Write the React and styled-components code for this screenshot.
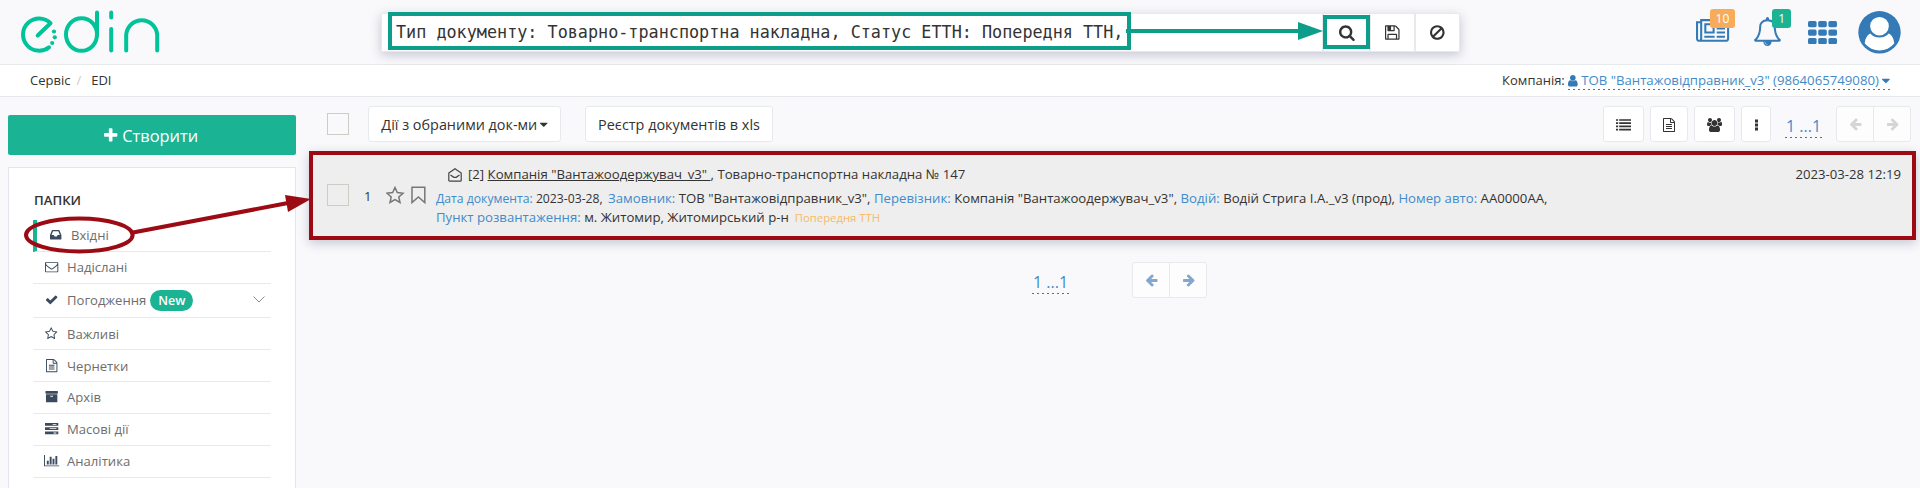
import React from "react";
import styled, { createGlobalStyle } from "styled-components";

const Global = createGlobalStyle`
  *, *::before, *::after { box-sizing: border-box; }
  body { margin: 0; background: #f9f9fb; overflow: hidden; }
  #root { font-family: "Open Sans", sans-serif; font-size: 13px; line-height: 18px; color: #333; }
`;

const C = {
  green: "#1ab394",
  teal: "#0d9e8b",
  red: "#9c0a14",
  blue: "#337ab7",
  line: "#e7eaec",
};

/* ---------- icons (1792 unit grid) ---------- */
const ICONS = {
  plus: [192, 1408, "M1600 736v192q0 40-28 68t-68 28h-416v416q0 40-28 68t-68 28h-192q-40 0-68-28t-28-68v-416h-416q-40 0-68-28t-28-68v-192q0-40 28-68t68-28h416v-416q0-40 28-68t68-28h192q40 0 68 28t28 68v416h416q40 0 68 28t28 68z"],
  search: [64, 1664, "M1216 832q0-185-131.5-316.5t-316.5-131.5-316.5 131.5-131.5 316.5 131.5 316.5 316.5 131.5 316.5-131.5 131.5-316.5zm512 832q0 52-38 90t-90 38q-54 0-90-38l-343-342q-179 124-399 124-143 0-273.5-55.5t-225-150-150-225-55.5-273.5 55.5-273.5 150-225 225-150 273.5-55.5 273.5 55.5 225 150 150 225 55.5 273.5q0 220-124 399l343 343q37 37 37 90z"],
  floppy: [128, 1536, "M512 1536h768v-384h-768v384zm896 0h128v-896q0-14-10-38.5t-20-34.5l-281-281q-10-10-34-20t-39-10v416q0 40-28 68t-68 28h-576q-40 0-68-28t-28-68v-416h-128v1280h128v-416q0-40 28-68t68-28h832q40 0 68 28t28 68v416zm-384-928v-320q0-13-9.5-22.5t-22.5-9.5h-192q-13 0-22.5 9.5t-9.5 22.5v320q0 13 9.5 22.5t22.5 9.5h192q13 0 22.5-9.5t9.5-22.5zm640 32v928q0 40-28 68t-68 28h-1344q-40 0-68-28t-28-68v-1344q0-40 28-68t68-28h928q40 0 88 20t76 48l280 280q28 28 48 76t20 88z"],
  ban: [128, 1536, "M1440 893q0-161-87-295l-754 753q137 89 297 89 111 0 211.5-43.5t173.5-116.5 116-174.5 43-212.5zm-999 299l755-754q-135-91-300-91-148 0-273 73t-198 199-73 274q0 162 89 299zm1223-299q0 157-61 300t-163.5 246-245 164-298.5 61-298.5-61-245-164-163.5-246-61-300 61-299.5 163.5-245.5 245-164 298.5-61 298.5 61 245 164 163.5 245.5 61 299.5z"],
  news: [0, 2048, "M1024 512h-384v384h384v-384zm128 640v128h-640v-128h640zm0-768v640h-640v-640h640zm640 768v128h-512v-128h512zm0-256v128h-512v-128h512zm0-256v128h-512v-128h512zm0-256v128h-512v-128h512zm-1536 960v-960h-128v960q0 26 19 45t45 19 45-19 19-45zm1664 0v-1088h-1536v1088q0 33-11 64h1483q26 0 45-19t19-45zm128-1216v1216q0 80-56 136t-136 56h-1664q-80 0-136-56t-56-136v-1088h256v-128h1792z"],
  bell: [64, 1664, "M912 1696q0-16-16-16-59 0-101.5-42.5t-42.5-101.5q0-16-16-16t-16 16q0 73 51.5 124.5t124.5 51.5q16 0 16-16zm-666-288h1300q-266-300-266-832 0-51-24-105t-69-103-121.5-80.5-169.5-31.5-169.5 31.5-121.5 80.5-69 103-24 105q0 532-266 832zm1482 0q0 52-38 90t-90 38h-448q0 106-75 181t-181 75-181-75-75-181h-448q-52 0-90-38t-38-90q50-42 91-88t85-119.5 74.5-158.5 50-206 19.5-260q0-152 117-282.5t307-158.5q-8-19-8-39 0-40 28-68t68-28 68 28 28 68q0 20-8 39 190 28 307 158.5t117 282.5q0 139 19.5 260t50 206 74.5 158.5 85 119.5 91 88z"],
  user: [256, 1280, "M1536 1399q0 109-62.5 187t-150.5 78h-854q-88 0-150.5-78t-62.5-187q0-85 8.5-160.5t31.5-152 58.5-131 94-89 134.5-34.5q131 128 313 128t313-128q76 0 134.5 34.5t94 89 58.5 131 31.5 152 8.5 160.5zm-256-887q0 159-112.5 271.5t-271.5 112.5-271.5-112.5-112.5-271.5 112.5-271.5 271.5-112.5 271.5 112.5 112.5 271.5z"],
  inbox: [128, 1536, "M1151 960h316q-1-3-2.5-8t-2.5-8l-212-496h-708l-212 496q-1 2-2.5 8t-2.5 8h316l95 192h320zm513 30v482q0 26-19 45t-45 19h-1408q-26 0-45-19t-19-45v-482q0-62 25-123l238-552q10-25 36.5-42t52.5-17h832q26 0 52.5 17t36.5 42l238 552q25 61 25 123z"],
  envelope: [0, 1792, "M1664 1504v-768q-32 36-69 66-268 206-426 338-51 43-83 67t-86.5 48.5-102.5 24.5h-2q-48 0-102.5-24.5t-86.5-48.5-83-67q-158-132-426-338-37-30-69-66v768q0 13 9.5 22.5t22.5 9.5h1472q13 0 22.5-9.5t9.5-22.5zm0-1051v-24.5l-.5-13-3-12.5-5.5-9-9-7.5-14-2.5h-1472q-13 0-22.5 9.5t-9.5 22.5q0 168 147 284 193 152 401 317 6 5 35 29.5t46 37.5 44.5 31.5 50.5 27.5 43 9h2q20 0 43-9t50.5-27.5 44.5-31.5 46-37.5 35-29.5q208-165 401-317 54-43 100.5-115.5t46.5-131.5zm128-37v1088q0 66-47 113t-113 47h-1472q-66 0-113-47t-47-113v-1088q0-66 47-113t113-47h1472q66 0 113 47t47 113z"],
  check: [0, 1792, "M1671 566q0 40-28 68l-724 724-136 136q-28 28-68 28t-68-28l-136-136-362-362q-28-28-28-68t28-68l136-136q28-28 68-28t68 28l294 295 656-657q28-28 68-28t68 28l136 136q28 28 28 68z"],
  star: [64, 1664, "M1201 1004l306-297-422-62-189-382-189 382-422 62 306 297-73 421 378-199 377 199zm527-357q0 22-26 48l-363 354 86 500q1 7 1 20 0 50-41 50-19 0-40-12l-449-236-449 236q-22 12-40 12-21 0-31.5-14.5t-10.5-35.5q0-6 2-20l86-500-364-354q-25-27-25-48 0-37 56-46l502-73 225-455q19-41 49-41t49 41l225 455 502 73q56 9 56 46z"],
  file: [128, 1536, "M1596 380q28 28 48 76t20 88v1152q0 40-28 68t-68 28h-1344q-40 0-68-28t-28-68v-1600q0-40 28-68t68-28h896q40 0 88 20t76 48zm-444-244v376h376q-10-29-22-41l-313-313q-12-12-41-22zm384 1528v-1024h-416q-40 0-68-28t-28-68v-416h-768v1536h1280zm-1024-864q0-14 9-23t23-9h704q14 0 23 9t9 23v64q0 14-9 23t-23 9h-704q-14 0-23-9t-9-23v-64zm736 224q14 0 23 9t9 23v64q0 14-9 23t-23 9h-704q-14 0-23-9t-9-23v-64q0-14 9-23t23-9h704zm0 256q14 0 23 9t9 23v64q0 14-9 23t-23 9h-704q-14 0-23-9t-9-23v-64q0-14 9-23t23-9h704z"],
  archive: [0, 1792, "M1088 832q0-26-19-45t-45-19h-256q-26 0-45 19t-19 45 19 45 45 19h256q26 0 45-19t19-45zm576-192v960q0 26-19 45t-45 19h-1408q-26 0-45-19t-19-45v-960q0-26 19-45t45-19h1408q26 0 45 19t19 45zm64-448v256q0 26-19 45t-45 19h-1536q-26 0-45-19t-19-45v-256q0-26 19-45t45-19h1536q26 0 45 19t19 45z"],
  server: [0, 1792, "M0 128h1792v384H0zM1024 256v128h512V256zM0 704h1792v384H0zM640 832v128h896V832zM0 1280h1792v384H0zM1152 1408v128h384v-128z"],
  chart: [0, 2048, "M640 896v512h-256v-512h256zm384-512v1024h-256v-1024h256zm1024 1152v128h-2048v-1536h128v1408h1920zm-640-896v768h-256v-768h256zm384-384v1152h-256v-1152h256z"],
  left: [64, 1600, "M1664 896v128q0 53-32.5 90.5t-84.5 37.5h-704l293 294q38 36 38 90t-38 90l-75 76q-37 37-90 37-52 0-91-37l-651-652q-37-37-37-90 0-52 37-91l651-650q38-38 91-38 52 0 90 38l75 74q38 38 38 91t-38 91l-293 293h704q52 0 84.5 37.5t32.5 90.5z"],
  right: [0, 1664, "M1600 960q0 54-37 91l-651 651q-39 37-91 37-51 0-90-37l-75-75q-38-38-38-91t38-91l293-293h-704q-52 0-84.5-37.5t-32.5-90.5v-128q0-53 32.5-90.5t84.5-37.5h704l-293-294q-38-36-38-90t38-90l75-75q38-38 90-38 53 0 91 38l651 651q37 35 37 90z"],
  users: [0, 1920, "M593 896q-162 5-265 128h-134q-82 0-138-40.5t-56-118.5q0-353 124-353 6 0 43.5 21t97.5 42.5 119 21.5q67 0 133-23-5 37-5 66 0 159 93 293zm1071 637q0 120-73 189.5t-194 69.5h-874q-121 0-194-69.5t-73-189.5q0-53 3.5-103.5t14-109 26.5-108.5 43-97.5 62-81 85.5-53.5 111.5-20q10 0 43 21.5t73 48 107 48 135 21.5 135-21.5 107-48 73-48 43-21.5q61 0 111.5 20t85.5 53.5 62 81 43 97.5 26.5 108.5 14 109 3.5 103.5zm-1024-1277q0 106-75 181t-181 75-181-75-75-181 75-181 181-75 181 75 75 181zm704 384q0 159-112.5 271.5t-271.5 112.5-271.5-112.5-112.5-271.5 112.5-271.5 271.5-112.5 271.5 112.5 112.5 271.5zm576 225q0 78-56 118.5t-138 40.5h-134q-103-123-265-128 93-134 93-293 0-29-5-66 66 23 133 23 59 0 119-21.5t97.5-42.5 43.5-21q124 0 124 353zm-128-609q0 106-75 181t-181 75-181-75-75-181 75-181 181-75 181 75 75 181z"],
  list: [0, 1792, "M0 256h256v192H0zM384 256h1408v192H384zM0 640h256v192H0zM384 640h1408v192H384zM0 1024h256v192H0zM384 1024h1408v192H384zM0 1408h256v192H0zM384 1408h1408v192H384z"],
  dots: [640, 384, "M640 192h384v384H640zM640 704h384v384H640zM640 1216h384v384H640z"],
  caret: [384, 1024, "M1408 704q0 26-19 45l-448 448q-19 19-45 19t-45-19l-448-448q-19-19-19-45t19-45 45-19h896q26 0 45 19t19 45z"],
};

const Svg = styled.svg`
  display: inline-block;
  flex: none;
  fill: currentColor;
`;
const Icon = ({ name, size = 14, className }) => {
  const [x, w, d] = ICONS[name];
  return (
    <Svg className={className} width={(w / 1792) * size} height={size} viewBox={`${x} 0 ${w} 1792`} fillRule="evenodd" overflow="visible">
      <path d={d} />
    </Svg>
  );
};

/* ---------- header ---------- */
const Page = styled.div`
  position: relative;
  height: 488px;
  overflow: hidden;
`;
const Header = styled.header`
  display: flex;
  height: 65px;
  border-bottom: 1px solid ${C.line};
  padding-left: 20px;
`;
const Logo = styled.svg`
  width: 142px;
  height: 46px;
  margin-top: 9px;
  fill: none;
  stroke: #00c39a;
  stroke-width: 4;
  stroke-linecap: round;
  stroke-linejoin: round;
`;
const SearchBar = styled.div`
  display: flex;
  width: 1079px;
  height: 39px;
  margin: 13px 0 0 219px;
  background: #fff;
  border: 1px solid ${C.line};
  box-shadow: 0 3px 10px rgba(60, 65, 110, 0.28);
`;
const Query = styled.div`
  flex: 1;
  padding-left: 14px;
  font: 16.8px/36px "DejaVu Sans Mono", monospace;
  white-space: pre;
`;
const SearchAction = styled.div`
  display: flex;
  align-items: center;
  justify-content: center;
  width: ${(p) => p.$w}px;
  border-left: 2px solid ${C.line};
  padding-bottom: 1px;
`;
const HeaderTools = styled.div`
  display: flex;
  flex: 1;
  align-items: flex-start;
  justify-content: flex-end;
  padding-right: 19px;
  color: ${C.blue};
`;
const Tool = styled.div`
  position: relative;
  display: flex;
  margin: ${(p) => p.$top}px ${(p) => p.$right}px 0 0;
`;
const Badge = styled.span`
  position: absolute;
  left: ${(p) => p.$left}px;
  top: ${(p) => p.$top}px;
  width: ${(p) => p.$w}px;
  height: 19px;
  border-radius: 3px;
  background: ${(p) => p.$bg};
  color: #fff;
  font-size: 12px;
  font-weight: 500;
  line-height: 19px;
  text-align: center;
`;
const Crumbs = styled.nav`
  display: flex;
  justify-content: space-between;
  height: 32px;
  background: #fff;
  border-bottom: 1px solid ${C.line};
  padding: 6px 30px 0;
  line-height: 19px;
`;
const Slash = styled.span`
  color: #ccc;
  padding: 0 10px 0 6px;
`;
const dashes = `repeating-linear-gradient(90deg, ${C.blue} 0 2px, transparent 2px 5px) bottom / 100% 1px no-repeat`;
const Company = styled.a`
  display: inline-block;
  height: 19px;
  color: #428bca;
  font-size: 13.2px;
  background: ${dashes};
  svg { color: ${C.blue}; vertical-align: -2px; }
`;

/* ---------- sidebar ---------- */
const Body = styled.div`
  display: flex;
`;
const Sidebar = styled.aside`
  width: 288px;
  margin: 18px 13px 0 8px;
`;
const Create = styled.button`
  display: flex;
  align-items: center;
  justify-content: center;
  gap: 5px;
  width: 100%;
  height: 40px;
  padding: 0 2px 0 0;
  border: 0;
  border-radius: 2px;
  background: ${C.green};
  color: #fff;
  font: 16.4px "Open Sans", sans-serif;
`;
const Folders = styled.section`
  height: 360px;
  margin-top: 12px;
  border: 1px solid #e3e4ee;
  background: #fff;
  padding: 22px 24px 0;
`;
const FolderTitle = styled.h5`
  height: 30px;
  margin: 0;
  padding-left: 1px;
  font-size: 13.2px;
  font-weight: 600;
  line-height: 20px;
`;
const Folder = styled.div`
  display: flex;
  align-items: center;
  height: ${(p) => (p.$tall ? 34 : 32)}px;
  padding: 0 6px ${(p) => (p.$low ? 0 : 2)}px 10px;
  border-bottom: 1px solid ${C.line};
  border-left: ${(p) => (p.$active ? "4px solid " + C.green : "0")};
  color: #6d6d6d;
  font-size: 13.1px;
`;
const FolderIcon = styled.span`
  display: flex;
  justify-content: center;
  width: 17px;
  margin-right: 7px;
  color: #3a4a5f;
`;
const NewBadge = styled.span`
  width: 43px;
  height: 21px;
  margin: 2px 0 0 4px;
  border-radius: 11px;
  background: ${C.green};
  color: #fff;
  font-size: 12.5px;
  font-weight: 600;
  line-height: 21px;
  text-align: center;
`;
const Chevron = styled.svg`
  margin-left: auto;
  fill: none;
  stroke: #8a8f99;
`;

/* ---------- content ---------- */
const Main = styled.main`
  width: 1607px;
`;
const Toolbar = styled.div`
  display: flex;
  align-items: flex-start;
  height: 54px;
  padding: 9px 5px 0 18px;
`;
const Checkbox = styled.span`
  flex: none;
  width: 22px;
  height: 22px;
  border: 1px solid #cfccc6;
`;
const TopCheckbox = styled(Checkbox)`
  margin-top: 7px;
`;
const Spacer = styled.div`
  flex: 1;
`;
const Button = styled.button`
  display: flex;
  align-items: center;
  justify-content: center;
  gap: 3px;
  width: ${(p) => p.$w}px;
  height: 36px;
  margin: 0 0 0 ${(p) => p.$ml}px;
  padding: 1px 0 0;
  border: 1px solid ${C.line};
  border-radius: 3px;
  background: #fff;
  color: #333;
  font: 14.4px "Open Sans", sans-serif;
  white-space: nowrap;
`;
const Pages = styled.a`
  width: 37px;
  height: 24px;
  background: ${dashes};
  color: #428bca;
  font-size: 16px;
  line-height: 24px;
  text-align: center;
  white-space: nowrap;
`;
const TopPages = styled(Pages)`
  margin: 8px 14px 0 14px;
`;
const PagerButtons = styled.div`
  display: flex;
  width: 75px;
  height: 36px;
  border: 1px solid ${C.line};
  border-radius: 3px;
  background: #fdfdfd;
  color: ${(p) => (p.$muted ? "#d5d5d5" : "#85a6cd")};
`;
const PagerButton = styled.span`
  display: flex;
  flex: 1;
  align-items: center;
  justify-content: center;
  & + & { border-left: 1px solid ${C.line}; }
`;
const Row = styled.article`
  display: flex;
  height: 89px;
  border: 4px solid ${C.red};
  background: #eee;
  padding: 0 11px 0 14px;
  box-shadow: 0 3px 10px rgba(60, 65, 110, 0.28);
`;
const RowLead = styled.div`
  display: flex;
  width: 109px;
  padding-top: 29px;
`;
const RowNumber = styled.span`
  width: 36px;
  padding: 3px 0 0 15px;
`;
const Marks = styled.svg`
  margin: 2px 0 0 1px;
  fill: none;
  stroke: #777;
  stroke-width: 1.5;
`;
const RowText = styled.div`
  flex: 1;
  font-size: 13.2px;
`;
const Subject = styled.div`
  display: flex;
  padding: 10px 0 5px 12px;
  line-height: 19px;
  white-space: pre;
`;
const OpenMail = styled.svg`
  margin: 3px 6px 0 0;
  fill: none;
  stroke: #444;
  stroke-width: 1.2;
`;
const Detail = styled.div`
  line-height: 19px;
  white-space: pre;
`;
const Label = styled.span`
  color: #428bca;
`;
const DocDate = styled.span`
  margin-right: 2px;
  font-size: 12.2px;
`;
const Status = styled.span`
  margin-left: 6px;
  color: #f8b968;
  font-size: 11.3px;
`;
const RowDate = styled.time`
  padding-top: 10px;
  font-size: 13.15px;
  line-height: 19px;
`;
const BottomPager = styled.div`
  display: flex;
  padding: 22px 0 0 723px;
  ${PagerButtons} { margin-left: 63px; }
  ${Pages} { margin-top: 8px; }
`;
const Overlay = styled.svg`
  position: absolute;
  inset: 0;
  pointer-events: none;
`;

const FOLDERS = [
  ["inbox", "Вхідні"],
  ["envelope", "Надіслані"],
  ["check", "Погодження"],
  ["star", "Важливі"],
  ["file", "Чернетки"],
  ["archive", "Архів"],
  ["server", "Масові дії"],
  ["chart", "Аналітика"],
];

const Pager = ({ muted }) => (
  <PagerButtons $muted={muted}>
    <PagerButton><Icon name="left" /></PagerButton>
    <PagerButton><Icon name="right" /></PagerButton>
  </PagerButtons>
);

export default function App() {
  return (
    <Page>
      <Global />
      <Header>
        <Logo viewBox="20 9 142 46">
          <path d="M37.700 35.500L50.500 23.200A16.100 16.100 0 1 0 49 47.300" />
          <ellipse cx="81.500" cy="34.500" rx="15.500" ry="16.300" />
          <path d="M97 12.500V34.500M111.200 12.500V17.500M111.200 29V50.500M126.200 50.500V34.500A15.600 16.200 0 0 1 157.200 34.500V50.500" />
          <g fill="#00c39a" stroke="none">
            <circle cx="54" cy="31.500" r="2.100" /><circle cx="54.800" cy="37.300" r="2.100" /><circle cx="52.200" cy="43" r="2.100" />
          </g>
        </Logo>
        <SearchBar>
          <Query>Тип документу: Товарно-транспортна накладна, Статус ЕТТН: Попередня ТТН,</Query>
          <SearchAction $w={47}><Icon name="search" size={17} /></SearchAction>
          <SearchAction $w={45}><Icon name="floppy" size={17} /></SearchAction>
          <SearchAction $w={45}><Icon name="ban" size={17} /></SearchAction>
        </SearchBar>
        <HeaderTools>
          <Tool $top={17} $right={25}>
            <Icon name="news" size={29} />
            <Badge $left={14} $top={-8} $w={25} $bg="#f8ac59">10</Badge>
          </Tool>
          <Tool $top={17} $right={27}>
            <Icon name="bell" size={29} />
            <Badge $left={18} $top={-8} $w={19} $bg={C.green}>1</Badge>
          </Tool>
          <Tool $top={21} $right={21}>
            <Svg width="29" height="23" viewBox="0 0 29 23">
              {[0, 1, 2].map((r) => [0, 1, 2].map((c) => (
                <rect key={`${r}${c}`} x={c * 10.2} y={r * 8.5} width="8.600" height="6.200" rx="1.600" />
              )))}
            </Svg>
          </Tool>
          <Tool $top={11} $right={0}>
            <Svg width="43" height="43" viewBox="0 0 43 43">
              <circle cx="21.500" cy="21.300" r="21.200" />
              <circle cx="21.500" cy="15.200" r="9.300" fill="#fff" />
              <path fill="#fff" d="M12.300 22.500C14.500 25 17.500 26.600 21.500 26.600S28.500 25 30.700 22.500C34.500 24.500 36 28.500 36.200 32.500A19 19 0 0 1 6.800 32.500C7 28.500 8.500 24.500 12.300 22.500Z" />
            </Svg>
          </Tool>
        </HeaderTools>
      </Header>
      <Crumbs>
        <div>Сервіс<Slash>/</Slash>EDI</div>
        <div>Компанія: <Company><Icon name="user" size={13.5} /> ТОВ "Вантажовідправник_v3" (9864065749080) <Icon name="caret" size={13.5} /></Company></div>
      </Crumbs>
      <Body>
        <Sidebar>
          <Create><Icon name="plus" size={17} />Створити</Create>
          <Folders>
            <FolderTitle>ПАПКИ</FolderTitle>
            {FOLDERS.map(([icon, label], i) => (
              <Folder key={label} $active={i === 0} $tall={i === 2} $low={i === 3 || i === 4}>
                <FolderIcon><Icon name={icon} size={13.3} /></FolderIcon>
                {label}
                {i === 2 && <NewBadge>New</NewBadge>}
                {i === 2 && <Chevron width="12" height="7"><path d="M.5.500L6 6L11.500.500" /></Chevron>}
              </Folder>
            ))}
          </Folders>
        </Sidebar>
        <Main>
          <Toolbar>
            <TopCheckbox />
            <Button $w={193} $ml={19}>Дії з обраними док-ми<Icon name="caret" size={13} /></Button>
            <Button $w={188} $ml={24}>Реєстр документів в xls</Button>
            <Spacer />
            <Button $w={41} $ml={0}><Icon name="list" size={15} /></Button>
            <Button $w={38} $ml={6}><Icon name="file" /></Button>
            <Button $w={41} $ml={6}><Icon name="users" /></Button>
            <Button $w={30} $ml={6}><Icon name="dots" /></Button>
            <TopPages>1 ...1</TopPages>
            <Pager muted />
          </Toolbar>
          <Row>
            <RowLead>
              <Checkbox />
              <RowNumber>1</RowNumber>
              <Marks width="42" height="19" viewBox="0 0 42 19">
                <path d="M9 1.500L11.300 6.600L17 7.200L12.800 11L14 16.500L9 13.600L4 16.500L5.200 11L1 7.200L6.700 6.600Z" />
                <path d="M26 1.200H38.800V16.500L32.400 11L26 16.500Z" />
              </Marks>
            </RowLead>
            <RowText>
              <Subject>
                <OpenMail width="14" height="14" viewBox="0 0 14 14">
                  <path d="M.8 5L7 .8L13.200 5V12.200Q13.200 13.200 12.200 13.200H1.800Q.8 13.200.8 12.200ZM2.500 7L5.800 9.300H8.200L11.500 7" />
                </OpenMail>
                [2] <u>Компанія "Вантажоодержувач_v3" </u>, Товарно-транспортна накладна № 147
              </Subject>
              <Detail>
                <DocDate><Label>Дата документа:</Label> 2023-03-28,</DocDate> <Label>Замовник:</Label> ТОВ "Вантажовідправник_v3", <Label>Перевізник:</Label> Компанія "Вантажоодержувач_v3", <Label>Водій:</Label> Водій Стрига І.А._v3 (прод), <Label>Номер авто:</Label> AA0000AA,
              </Detail>
              <Detail>
                <Label>Пункт розвантаження:</Label> м. Житомир, Житомирський р-н<Status>Попередня ТТН</Status>
              </Detail>
            </RowText>
            <RowDate>2023-03-28 12:19</RowDate>
          </Row>
          <BottomPager>
            <Pages>1 ...1</Pages>
            <Pager />
          </BottomPager>
        </Main>
      </Body>
      <Overlay width="1920" height="488">
        <g fill="none" strokeWidth="4">
          <g stroke={C.teal}>
            <rect x="390" y="14" width="739" height="34" />
            <rect x="1325" y="17" width="43" height="30" />
            <path d="M1126 31H1300" />
          </g>
          <g stroke={C.red}>
            <ellipse cx="79.300" cy="235" rx="53.300" ry="16.500" />
            <path d="M133 232.500L288 203" />
          </g>
        </g>
        <path fill={C.teal} d="M1298 22L1323 31L1298 40Z" />
        <path fill={C.red} d="M285 195L311 199L288 212Z" />
      </Overlay>
    </Page>
  );
}
